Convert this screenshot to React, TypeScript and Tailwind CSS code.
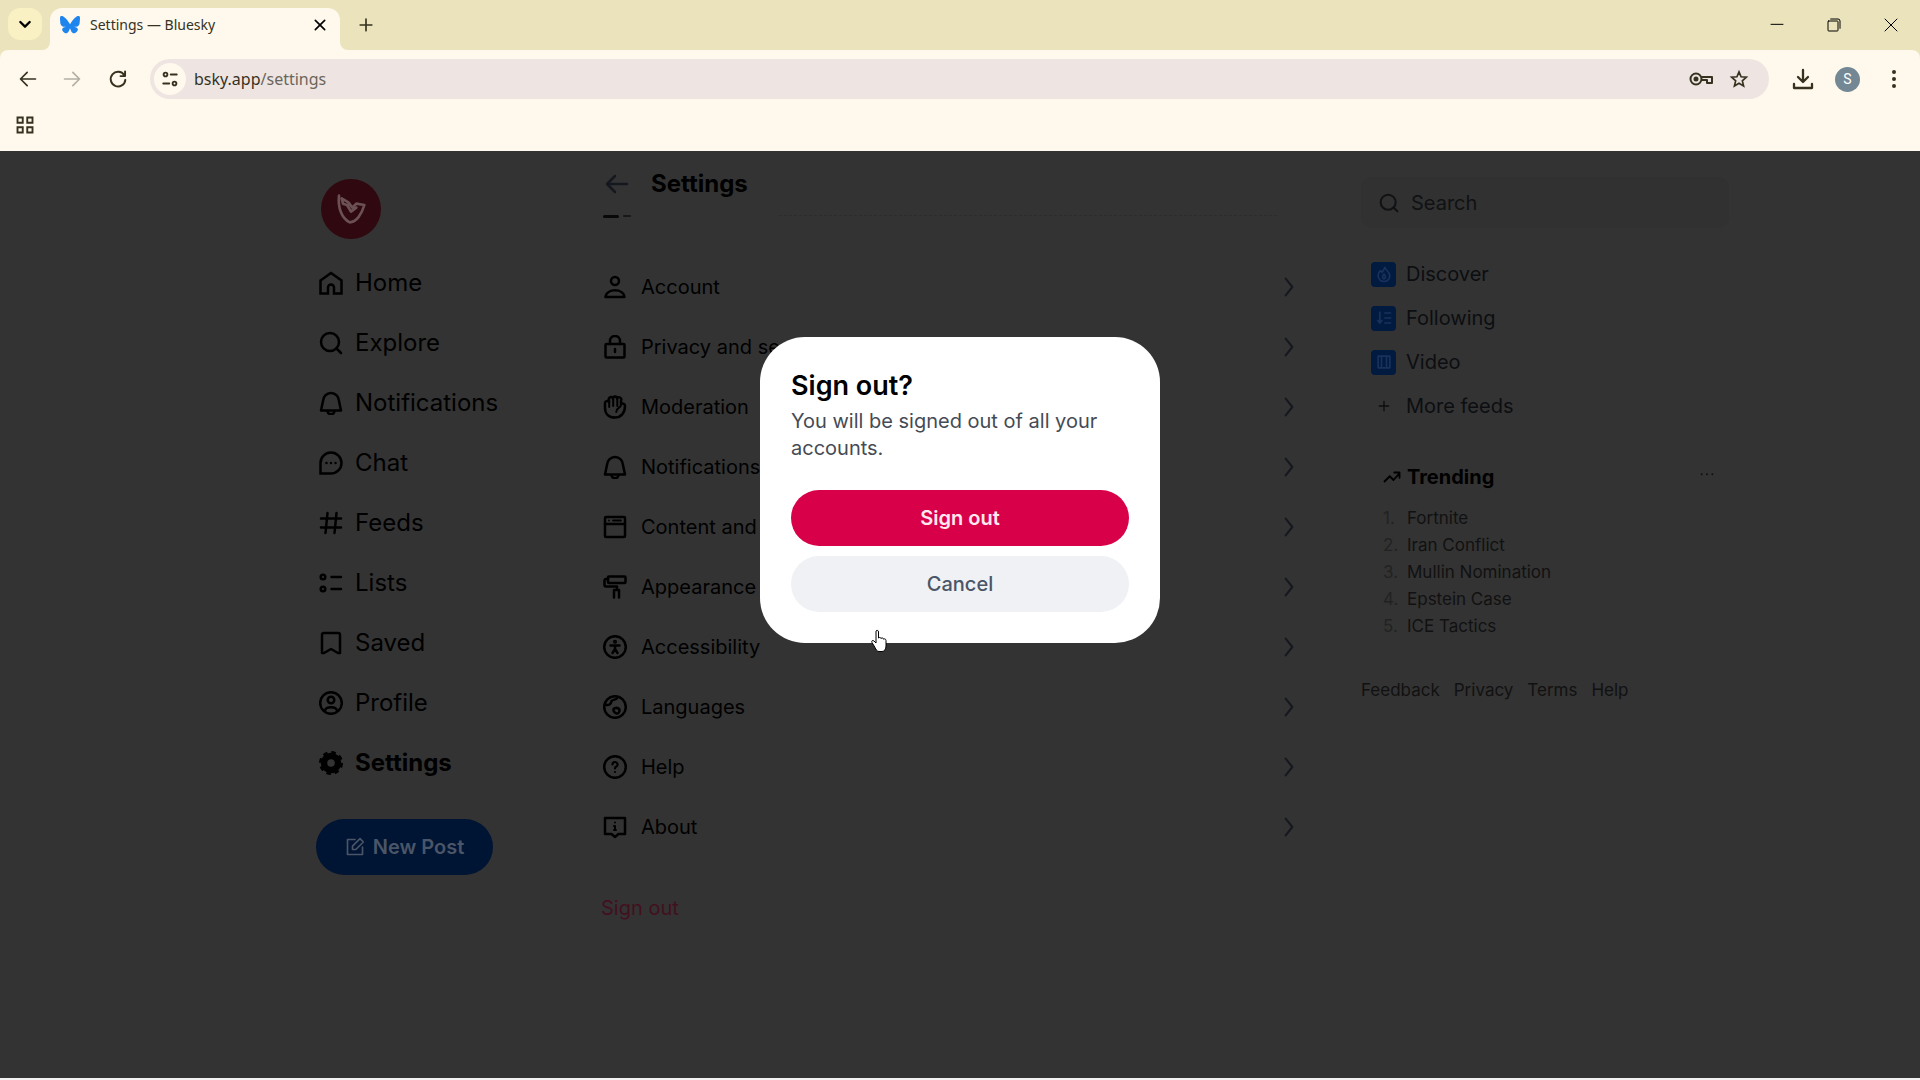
import React from 'react';
import { clsx } from 'clsx';

type IconProps = { className?: string; bold?: boolean; children?: React.ReactNode };

const Svg = ({ className, bold, children }: IconProps) => (
  <svg
    viewBox="0 0 24 24"
    fill="none"
    stroke="currentColor"
    strokeWidth={bold ? 2.5 : 2}
    strokeLinecap="round"
    strokeLinejoin="round"
    aria-hidden="true"
    className={clsx('shrink-0', className)}
  >
    {children}
  </svg>
);

// Icon shapes, all drawn on a 24 unit grid
const shapes = {
  home: <path strokeLinejoin="miter" d="M1.500 9.500 12 2l10.500 7.500V22.500H15v-6a3 3 0 0 0-6 0v6H1.500z" />,
  search: (
    <>
      <circle cx="11" cy="11" r="9" />
      <path d="m17.5 17.500 4.500 4.500" />
    </>
  ),
  bell: (
    <>
      <path d="M4 10a8 8 0 0 1 16 0l2 9.500H2z" />
      <path d="M8.500 20.500a3.600 3.600 0 0 0 7 0" />
    </>
  ),
  chat: (
    <>
      <path strokeLinejoin="miter" d="M12 1.500A10.500 10.500 0 1 1 12 22.500H1.500V12A10.500 10.500 0 0 1 12 1.500z" />
      <path d="M7.500 12h.01M12 12h.01M16.500 12h.01" />
    </>
  ),
  hash: <path d="M8.500 2 6.500 22M17.500 2l-2 20M2 7.500h20M2 16.500h20" />,
  list: (
    <>
      <circle cx="4" cy="6" r="2.300" />
      <circle cx="4" cy="18" r="2.300" />
      <path d="M12.500 6h9.500M12.500 18h9.500" />
    </>
  ),
  bookmark: <path d="M3 4a2 2 0 0 1 2-2h14a2 2 0 0 1 2 2v18h-2l-7-4-7 4H3z" />,
  profile: (
    <>
      <circle cx="12" cy="12" r="10.800" />
      <circle cx="12" cy="9" r="3.300" />
      <path d="M6 19.500c1-4.500 11-4.500 12 0" />
    </>
  ),
  account: (
    <>
      <circle cx="12" cy="6" r="4" />
      <path d="M2.500 22c1-9 18-9 19 0z" />
    </>
  ),
  lock: (
    <>
      <rect x="2.500" y="9" width="19" height="13.500" rx="1" />
      <path d="M7 9V6a5 5 0 0 1 10 0v3M12 14v3" />
    </>
  ),
  hand: (
    <>
      <path d="M2 13V8.500a2.200 2.200 0 0 1 4-1.500V5a2 2 0 0 1 4-1.500 2 2 0 0 1 4 0 2 2 0 0 1 4 2V9c2-1 4 0 4 2 0 7-4 11.500-10 11.500S2 19 2 13z" />
      <path strokeWidth={2} d="M6.200 7v5M10.200 4v7M14.300 4v7M18.300 9c-.5 5-5 3-5 8" />
    </>
  ),
  windowIcon: (
    <>
      <rect x="2" y="2" width="20" height="20" rx="1" />
      <path d="M2 9h20" />
      <path strokeWidth={1.8} d="M6 5.500h.01M10 5.500h8" />
    </>
  ),
  roller: (
    <>
      <rect x="5" y="1.500" width="17.500" height="6.500" rx="1" />
      <path d="M5 4H3a1.500 1.500 0 0 0-1.500 1.500V10A1.500 1.500 0 0 0 3 11.500h11V15M11 22.500V15h5v7.500" />
    </>
  ),
  accessibility: (
    <>
      <circle cx="12" cy="12" r="10.800" />
      <circle cx="12" cy="6.800" r="0.800" />
      <path d="M7.500 10.500h9M12 10.500V14m0 0-2.500 4M12 14l2.500 4" />
    </>
  ),
  globe: (
    <>
      <circle cx="12" cy="12" r="10.800" />
      <path d="M2 9.500c4 1.500 6-.5 6.500-3.500 1-2 4.500 0 6.500-4M11 13.500c3-1.500 6 0 5.500 2.500s-2.500 3-4 2-3-3-1.500-4.500z" />
    </>
  ),
  help: (
    <>
      <circle cx="12" cy="12" r="10.800" />
      <path strokeWidth={2.2} d="M9.500 9.500a2.500 2.500 0 1 1 3.500 2.300c-.8.400-1 .9-1 1.700M12 17v.01" />
    </>
  ),
  about: (
    <>
      <path d="M2 3h20v16h-6.500L12 22l-3.500-3H2z" />
      <path strokeWidth={2} d="M12 7.500v.01M11 11h1v4m-1 0h2" />
    </>
  ),
};

type ShapeName = keyof typeof shapes;

const navItems: { label: string; icon: ShapeName }[] = [
  { label: 'Home', icon: 'home' },
  { label: 'Explore', icon: 'search' },
  { label: 'Notifications', icon: 'bell' },
  { label: 'Chat', icon: 'chat' },
  { label: 'Feeds', icon: 'hash' },
  { label: 'Lists', icon: 'list' },
  { label: 'Saved', icon: 'bookmark' },
  { label: 'Profile', icon: 'profile' },
];

const settingsItems: { label: string; icon: ShapeName }[] = [
  { label: 'Account', icon: 'account' },
  { label: 'Privacy and security', icon: 'lock' },
  { label: 'Moderation', icon: 'hand' },
  { label: 'Notifications', icon: 'bell' },
  { label: 'Content and media', icon: 'windowIcon' },
  { label: 'Appearance', icon: 'roller' },
  { label: 'Accessibility', icon: 'accessibility' },
  { label: 'Languages', icon: 'globe' },
  { label: 'Help', icon: 'help' },
  { label: 'About', icon: 'about' },
];

const trends = ['Fortnite', 'Iran Conflict', 'Mullin Nomination', 'Epstein Case', 'ICE Tactics'];

const feeds = [
  {
    label: 'Discover',
    glyph: <path d="M13 4c1 4 6 5 6 10a7 7 0 0 1-14 0c0-3 1.500-5 3-6l1.500 2C11 9 12 6 13 4zM12 12c2 2 2.500 5 0 6-2.500-1-2-4 0-6z" />,
  },
  { label: 'Following', glyph: <path d="M7 5v13m-2.500-3L7 18l2.500-3M13 6h7M13 12h7M13 18h7" /> },
  {
    label: 'Video',
    glyph: (
      <>
        <rect x="5" y="5" width="14" height="14" />
        <path d="M9 5v14M15 5v14" />
      </>
    ),
  },
];

const BrowserChrome = () => (
  <header className="bg-[#eae3bb] font-['Noto_Sans',sans-serif] text-[#35321f]">
    <div className="flex h-[50px]">
      <button aria-label="Search tabs" className="ml-2 mt-2 flex h-8 w-[34px] items-center justify-center rounded-xl bg-[#f9f0c3]">
        <Svg className="size-4 text-black"><path strokeWidth={3.500} d="m5 9 7 7 7-7" /></Svg>
      </button>
      <svg viewBox="0 0 8 8" className="size-2 shrink-0 self-end" aria-hidden="true"><path fill="#fff8ec" d="M8 0v8H0a8 8 0 0 0 8-8z" /></svg>
      <div className="mt-2 flex w-[290px] items-center rounded-t-xl bg-[#fff8ec] pb-2 pl-[10px] pr-3">
        <svg viewBox="0 0 64 57" className="h-[18px] w-5 shrink-0" aria-hidden="true">
          <path
            fill="#1f85ee"
            d="M13.900 3.800C21.200 9.300 29.100 20.400 32 26.400c2.900-6 10.800-17.100 18.100-22.600C55.400-.1 64-3.100 64 6.500c0 1.900-1.100 16.100-1.700 18.400-2.200 8-10.300 10-17.500 8.800 12.600 2.100 15.800 9.200 8.900 16.300C40.500 63.500 34.800 46.600 33.300 42.200c-1-3-1.600-3-2.600 0C29.200 46.600 23.500 63.500 10.300 50 3.400 42.900 6.600 35.800 19.200 33.700 12 34.900 3.900 32.900 1.700 24.900 1.100 22.600 0 8.400 0 6.500 0-3.100 8.600-.1 13.900 3.800z"
          />
        </svg>
        <span className="ml-[10px] flex-1 text-sm">Settings — Bluesky</span>
        <button aria-label="Close tab">
          <Svg className="size-4 text-black"><path strokeWidth={2.500} d="m5 5 14 14M19 5 5 19" /></Svg>
        </button>
      </div>
      <svg viewBox="0 0 8 8" className="size-2 shrink-0 self-end" aria-hidden="true"><path fill="#fff8ec" d="M0 0v8h8a8 8 0 0 1-8-8z" /></svg>
      <button aria-label="New tab" className="ml-2 self-center">
        <Svg className="size-5"><path d="M12 5v14M5 12h14" /></Svg>
      </button>
      <div className="ml-auto flex items-center gap-[41px] pr-[21px] text-black">
        <button aria-label="Minimize"><Svg className="size-4"><path strokeWidth={1.500} d="M3 11h18" /></Svg></button>
        <button aria-label="Restore">
          <Svg className="size-4">
            <rect x="3" y="6" width="15" height="15" rx="1" strokeWidth={1.500} />
            <path strokeWidth={1.500} d="M7 3h11a3 3 0 0 1 3 3v11" />
          </Svg>
        </button>
        <button aria-label="Close"><Svg className="size-4"><path strokeWidth={1.500} d="m3 3 18 18M21 3 3 21" /></Svg></button>
      </div>
    </div>
    <div className="rounded-t-lg bg-[#fff8ec]">
      <div className="flex h-[60px] items-center pb-[2px] pl-[18px] pr-[14px]">
        <button aria-label="Back"><Svg className="size-5"><path d="M21 12H3m8-8-8 8 8 8" /></Svg></button>
        <button aria-label="Forward" className="ml-6 text-[#b4afa4]"><Svg className="size-5"><path d="M3 12h18m-8-8 8 8-8 8" /></Svg></button>
        <button aria-label="Reload" className="ml-[26px]">
          <Svg className="size-5"><path strokeWidth={2.300} d="M19.500 7.500A8.800 8.800 0 1 0 20.800 13M20.500 3v5.500H15" /></Svg>
        </button>
        <div className="ml-[22px] flex h-10 flex-1 items-center rounded-full bg-[#eee5e2] pl-1 pr-5">
          <button aria-label="Site information" className="flex size-8 items-center justify-center rounded-full bg-[#fff8ec]">
            <Svg className="size-[18px]" bold>
              <circle cx="6" cy="6" r="2.500" />
              <circle cx="18" cy="18" r="2.500" />
              <path d="M13 6h8M3 18h8" />
            </Svg>
          </button>
          <div className="ml-2 flex-1 text-base">
            bsky.app<span className="text-[#6b655c]">/settings</span>
          </div>
          <button aria-label="Passwords">
            <Svg className="size-6">
              <circle cx="7" cy="12" r="5.500" />
              <circle cx="7" cy="12" r="1.500" fill="currentColor" />
              <path d="M13 10h10v6h-5v-3h-5" />
            </Svg>
          </button>
          <button aria-label="Bookmark this tab" className="ml-4">
            <Svg className="size-5">
              <path strokeLinejoin="miter" d="m12 3.500 2.500 5.900 6.300.5-4.800 4.200 1.500 6.200L12 17l-5.500 3.300L8 14.100 3.200 9.900l6.300-.5z" />
            </Svg>
          </button>
        </div>
        <button aria-label="Downloads" className="ml-[22px]">
          <Svg className="size-6"><path strokeWidth={2.300} d="M12 3v12m-5-5 5 5 5-5M3 17v4h18v-4" /></Svg>
        </button>
        <button className="ml-[20px] flex size-[25px] items-center justify-center rounded-full bg-[#738795] font-['Roboto',sans-serif] text-sm text-white">S</button>
        <button aria-label="Menu" className="ml-[22px]">
          <Svg className="size-6"><path strokeWidth={4} d="M12 5v.01M12 12v.01M12 19v.01" /></Svg>
        </button>
      </div>
      <div className="flex h-[41px] items-start pl-4 pt-[6px]">
        <button aria-label="Apps">
          <Svg className="size-[18px]">
            <path strokeWidth={2.500} strokeLinejoin="miter" d="M2 2h7v7H2zM15 2h7v7h-7zM2 15h7v7H2zM15 15h7v7h-7z" />
          </Svg>
        </button>
      </div>
    </div>
  </header>
);

const SideNav = () => (
  <nav className="w-[269px] shrink-0 pt-7" aria-label="Main">
    <a href="#profile" aria-label="Your profile" className="ml-[5px] flex size-[60px] items-center justify-center rounded-full bg-[#300810] text-[#6b5054]">
      <Svg className="size-8"><path d="M3 2c-1 9 2 17 8 20 5 0 9-6 11-13l-6-1-3 3-3-4-5-3 1 4 3 1 3 5 4-3" /></Svg>
    </a>
    <ul className="mt-[14px]">
      {navItems.map(({ label, icon }) => (
        <li key={label}>
          <a href="#nav" className="flex h-[60px] items-center gap-3 pl-[3px] text-2xl">
            <Svg className="size-6" bold>{shapes[icon]}</Svg>
            {label}
          </a>
        </li>
      ))}
      <li>
        <a href="#settings" aria-current="page" className="flex h-[60px] items-center gap-3 pl-[3px] text-2xl font-bold">
          <Svg className="size-6">
            <circle cx="12" cy="12" r="7" strokeWidth={6.500} />
            <circle cx="12" cy="12" r="9.500" strokeWidth={5} strokeDasharray="4 3.461" strokeLinecap="butt" />
          </Svg>
          Settings
        </a>
      </li>
    </ul>
    <button className="mt-[26px] flex h-14 w-[177px] items-center justify-center gap-2 rounded-full bg-[#001433] text-xl font-semibold text-[#4a5568]">
      <Svg className="size-5"><path d="M12 3H3v18h18v-9M9 15v-4l9-9 4 4-9 9z" /></Svg>
      New Post
    </button>
  </nav>
);

const SettingsList = () => (
  <main className="w-[750px] shrink-0">
    <div className="flex h-[64px] items-center gap-[22px] pl-5 pt-px">
      <button aria-label="Go back" className="text-[#15191f]">
        <Svg className="size-6" bold><path d="M22 12H3m7-8-8 8 8 8" /></Svg>
      </button>
      <h1 className="text-2xl font-bold">Settings</h1>
    </div>
    <div className="mx-[18px] flex h-[42px] items-start gap-1">
      <span className="h-[3px] w-4 rounded-full bg-[#080808]" />
      <span className="h-[2px] w-2 rounded-full bg-[#181818]" />
      <span className="ml-36 mr-10 flex-1 border-t border-dashed border-[#2c2c2c]" />
    </div>
    <ul>
      {settingsItems.map(({ label, icon }) => (
        <li key={label}>
          <a href="#item" className="flex h-[60px] items-center gap-[14px] pl-[18px] pr-9 text-xl">
            <Svg className="size-6" bold>{shapes[icon]}</Svg>
            <span className="flex-1">{label}</span>
            <Svg className="size-5 text-[#15191f]" bold><path d="m8 2 8 10-8 10" /></Svg>
          </a>
        </li>
      ))}
    </ul>
    <button className="mt-[37px] pl-4 text-xl text-[#42101e]">Sign out</button>
  </main>
);

const RightColumn = () => (
  <aside className="w-[402px] shrink-0 pl-[26px] pr-2 pt-[26px]">
    <label className="flex h-[51px] items-center gap-3 rounded-xl bg-[#313131] pl-[18px] text-[#101214]">
      <Svg className="size-5" bold>{shapes.search}</Svg>
      <input type="search" aria-label="Search" placeholder="Search" className="w-full bg-transparent text-xl outline-none placeholder:text-[#101214]" />
    </label>
    <ul className="mt-6 text-[#0c0e11]">
      {feeds.map(({ label, glyph }) => (
        <li key={label}>
          <a href="#feed" className="flex h-11 items-center gap-[10px] pl-[10px] text-xl">
            <span className="flex size-[25px] items-center justify-center rounded bg-[#001a40] text-[#18325c]">
              <Svg className="size-5">{glyph}</Svg>
            </span>
            {label}
          </a>
        </li>
      ))}
      <li>
        <a href="#feeds" className="flex h-11 items-center gap-[10px] pl-[10px] text-xl">
          <span className="flex w-[25px] justify-center"><Svg className="size-4"><path d="M12 5v14M5 12h14" /></Svg></span>
          More feeds
        </a>
      </li>
    </ul>
    <section className="mt-8">
      <div className="flex h-[34px] items-center gap-[6px] pl-[22px]">
        <Svg className="size-[18px]" bold><path d="m2 18 7-7 5 5 8-9M15 6h7v7" /></Svg>
        <h2 className="flex-1 text-xl font-bold">Trending</h2>
        <button aria-label="Trending options" className="mr-[14px] text-[#111]">
          <Svg className="size-4"><path strokeWidth={3} d="M4 8h.01M12 8h.01M20 8h.01" /></Svg>
        </button>
      </div>
      <ol className="mt-[11px] text-[17px] leading-[27px] text-[#111]">
        {trends.map((name, i) => (
          <li key={name} className="flex pl-[22px]">
            <span className="w-6 text-[#222]">{i + 1}.</span>
            <a href="#trend">{name}</a>
          </li>
        ))}
      </ol>
    </section>
    <footer className="mt-[38px] flex gap-[14px] text-[17px] text-[#111]">
      <a href="#feedback">Feedback</a>
      <a href="#privacy">Privacy</a>
      <a href="#terms">Terms</a>
      <a href="#help">Help</a>
    </footer>
  </aside>
);

const SignOutDialog = () => (
  <div className="absolute inset-0 flex items-start justify-center pt-[186px]">
    <div role="dialog" aria-modal="true" aria-labelledby="dialog-title" className="w-[400px] rounded-[45px] bg-white p-[31px]">
      <h2 id="dialog-title" className="text-[27px] font-semibold leading-9 text-black">Sign out?</h2>
      <p className="mt-1 text-xl leading-[27px] text-[#454b54]">You will be signed out of all your accounts.</p>
      <button className="mt-7 h-14 w-full rounded-full bg-[#d80048] text-xl font-semibold text-[#ffe8f0]">Sign out</button>
      <button className="mt-[10px] h-14 w-full rounded-full bg-[#eff1f4] text-xl font-medium text-[#4a5667]">Cancel</button>
    </div>
  </div>
);

const App: React.FC = () => (
  <div className="flex min-h-screen flex-col bg-[#f2f2f2]">
    <BrowserChrome />
    <div className="relative mb-[2px] flex-1 overflow-hidden bg-[#333333] font-['Inter',sans-serif] text-black">
      <div className="flex justify-center pl-[133px]">
        <SideNav />
        <SettingsList />
        <RightColumn />
      </div>
      <SignOutDialog />
      {/* Hand pointer */}
      <svg viewBox="0 0 20 24" className="absolute left-[870px] top-[478px] h-6 w-5" aria-hidden="true">
        <path
          fill="white"
          stroke="black"
          d="M6 2c1-1.500 2.500-.5 2.500 1v6c1-1 2.500-.5 2.500.5 1-1 2.500-.5 2.500.7 1-.8 2.500-.2 2.500 1.300V17c0 3-1.500 5.500-4 5.500H9c-2 0-3-2-4-4l-3-5c-1-2 1-2.500 2-1.500l2 2z"
        />
      </svg>
    </div>
  </div>
);

export default App;
